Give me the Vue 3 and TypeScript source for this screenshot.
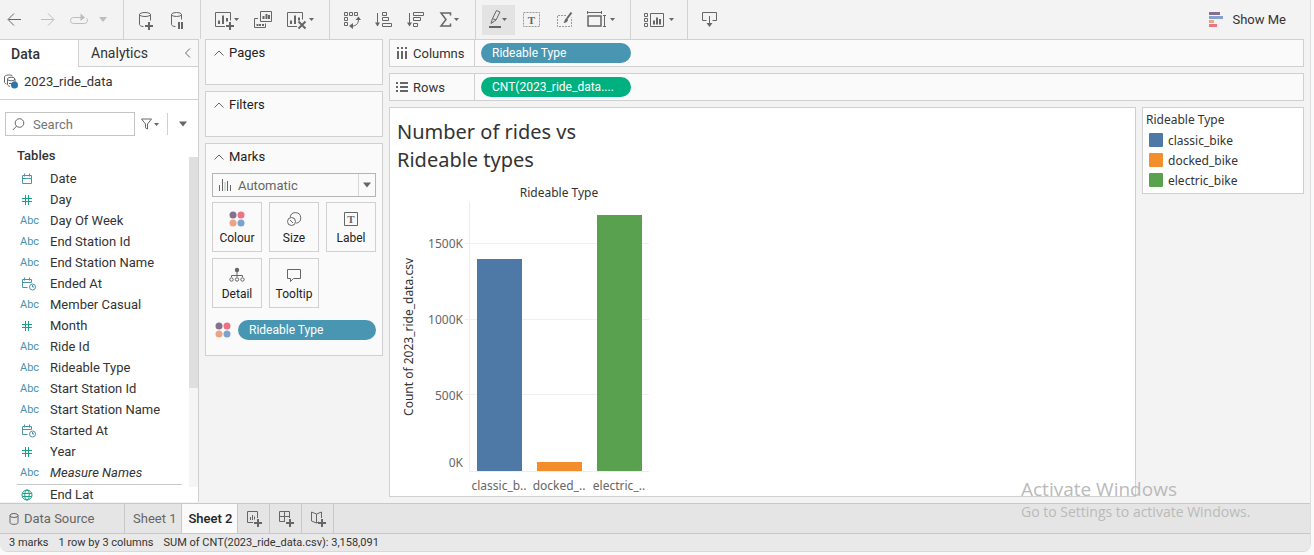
<script setup lang="ts">
import { ref } from 'vue'

type FieldKind = 'date' | 'datetime' | 'number' | 'text' | 'geo'
interface Field { name: string; kind: FieldKind; italic?: boolean }
interface Bar { label: string; short: string; value: number; color: string }

const fields: Field[] = [
  { name: 'Date', kind: 'date' },
  { name: 'Day', kind: 'number' },
  { name: 'Day Of Week', kind: 'text' },
  { name: 'End Station Id', kind: 'text' },
  { name: 'End Station Name', kind: 'text' },
  { name: 'Ended At', kind: 'datetime' },
  { name: 'Member Casual', kind: 'text' },
  { name: 'Month', kind: 'number' },
  { name: 'Ride Id', kind: 'text' },
  { name: 'Rideable Type', kind: 'text' },
  { name: 'Start Station Id', kind: 'text' },
  { name: 'Start Station Name', kind: 'text' },
  { name: 'Started At', kind: 'datetime' },
  { name: 'Year', kind: 'number' },
  { name: 'Measure Names', kind: 'text', italic: true },
]
const measures: Field[] = [{ name: 'End Lat', kind: 'geo' }]

const bars: Bar[] = [
  { label: 'classic_bike', short: 'classic_b..', value: 1402000, color: '#4e79a7' },
  { label: 'docked_bike', short: 'docked_..', value: 62000, color: '#f28e2b' },
  { label: 'electric_bike', short: 'electric_..', value: 1694091, color: '#59a14f' },
]
const axisMax = 1780000
const ticks = [
  { label: '1500K', value: 1500000 },
  { label: '1000K', value: 1000000 },
  { label: '500K', value: 500000 },
]
const share = (value: number): string => `${((value / axisMax) * 100).toFixed(2)}%`

const markType = ref('Automatic')
const query = ref('')
</script>

<template>
  <div class="app">
    <header class="toolbar">
      <div class="group">
        <button class="tool" aria-label="Undo">
          <svg width="30" height="39" viewBox="0 0 30 39"><path class="s" d="M21 19.5H8.500M14 13.500l-6 6 6 6" /></svg>
        </button>
        <button class="tool dim" aria-label="Redo">
          <svg width="34" height="39" viewBox="30 0 34 39"><path class="s" d="M41 19.500h12.500M48 13.500l6 6-6 6" /></svg>
        </button>
        <button class="tool dim" aria-label="Replay">
          <svg width="30" height="39" viewBox="64 0 30 39"><path class="s" d="M82 17.500h-8.500a3 3 0 0 0 0 6h11a3 3 0 0 0 2-5.200" /><path class="f" d="M80.500 13.500l4.500 4-4.500 3.500z" /></svg>
        </button>
        <button class="tool dim" aria-label="Replay speed">
          <svg width="29" height="39" viewBox="94 0 29 39"><path class="f" d="M99 17h8l-4 5z" /></svg>
        </button>
      </div>
      <div class="group">
        <button class="tool" aria-label="New data source">
          <svg width="38" height="39" viewBox="124 0 38 39"><path class="s" d="M139.500 14.500v10c0 1 1.500 2 4 2M150.500 14.500v6" /><ellipse class="s" cx="145" cy="14.500" rx="5.500" ry="2" /><path class="s2" d="M149 22v8M145 26h8" /></svg>
        </button>
        <button class="tool" aria-label="Pause auto updates">
          <svg width="38" height="39" viewBox="162 0 38 39"><path class="s" d="M171.500 14.500v10c0 1 1.500 2 4 2M181.500 14.500v5" /><ellipse class="s" cx="176.500" cy="14.500" rx="5" ry="2" /><path class="s2" d="M179 22v7M182 22v7" /></svg>
        </button>
      </div>
      <div class="group">
        <button class="tool" aria-label="New worksheet">
          <svg width="46" height="39" viewBox="201 0 46 39"><path class="s" d="M225 26.500h-9.500v-14h15v8" /><path class="s2 t" d="M219 20.500v3.500M223 15.500v8.500M227 18v3.500M230 22v8M226 26h8" /><path class="f" d="M234 18h5l-2.500 3z" /></svg>
        </button>
        <button class="tool" aria-label="Duplicate sheet">
          <svg width="34" height="39" viewBox="247 0 34 39"><path class="s" d="M260.500 11.500h11v10h-11zM258 18.500h-3.500v9h11v-4" /><path class="s2 t" d="M263.500 16v3M266.500 14v5M269 15v4M257.500 24v2M260 24v2M263 24v2" /></svg>
        </button>
        <button class="tool" aria-label="Clear sheet">
          <svg width="48" height="39" viewBox="281 0 48 39"><path class="s" d="M297 26.500h-9.500v-14h15v7" /><path class="s2 t" d="M291 20.500v3.500M295 15.500v8.500M299 17.500v3" /><path class="s2" d="M298.500 21.500l7 7M305.500 21.500l-7 7" /><path class="f" d="M309 18h5l-2.500 3z" /></svg>
        </button>
      </div>
      <div class="group">
        <button class="tool" aria-label="Swap rows and columns">
          <svg width="38" height="39" viewBox="330 0 38 39"><path class="s" d="M344.500 12.500h3v3h-3zM349.500 12.500h3v3h-3zM354.500 12.500h3v3h-3zM344.500 17.500h3v3h-3zM344.500 22.500h3v3h-3zM358.500 19.500c0 4-2.500 6.500-6 6.500" /><path class="f" d="M355.500 20l3-3.500 2.500 3.500zM353 23v6l-4-3z" /></svg>
        </button>
        <button class="tool" aria-label="Sort ascending">
          <svg width="32" height="39" viewBox="368 0 32 39"><path class="s" d="M377.500 13v12M382.500 12.500h4v3h-4zM382.500 17.500h6v3h-6zM382.500 23.500h9v3h-9z" /><path class="f" d="M375 22.500h5l-2.500 4z" /></svg>
        </button>
        <button class="tool" aria-label="Sort descending">
          <svg width="32" height="39" viewBox="400 0 32 39"><path class="s" d="M409.500 13v12M413.500 12.500h10v3h-10zM413.500 17.500h7v3h-7zM413.500 23.500h4v3h-4z" /><path class="f" d="M407 22.500h5l-2.500 4z" /></svg>
        </button>
        <button class="tool" aria-label="Totals">
          <svg width="43" height="39" viewBox="432 0 43 39"><path class="s b" d="M450.500 15.500v-2.500h-9.500l5 6.500-5 6.500h9.500v-2.500" /><path class="f" d="M454 18h5l-2.500 3z" /></svg>
        </button>
      </div>
      <div class="group mid">
        <button class="tool on" aria-label="Highlight">
          <svg width="33" height="30" viewBox="482 5 33 30"><path class="s" d="M492.500 18.500l4-8 3.500 1.500-4 8zM492.500 18.500l-1.500 5 5-3.500" /><path class="s2" d="M489 27h12" /><path class="f" d="M502 18h5l-2.500 3z" /></svg>
        </button>
        <button class="tool" aria-label="Show mark labels">
          <svg width="33" height="39" viewBox="515 0 33 39"><rect class="s dash" x="523.500" y="12.500" width="16" height="14" /><text x="531.500" y="24" text-anchor="middle" class="tee">T</text></svg>
        </button>
        <button class="tool" aria-label="Format">
          <svg width="32" height="39" viewBox="548 0 32 39"><path class="s dash" d="M566 15.500h-8.500v11h14v-9" /><path class="s2" d="M571.500 12.500l-4.500 6" /><path class="f" d="M566.500 18l1.500 1.500c0 2-2 3.500-4.500 3.500 1-1 1-4 3-5z" /></svg>
        </button>
        <button class="tool" aria-label="Fit">
          <svg width="50" height="39" viewBox="580 0 50 39"><path class="s b" d="M588 16h13v10h-13z" /><path class="s" d="M587.500 11v3M601.500 11v3M587 12.500h15M604.500 15v12M603 15.500h3M603 26.500h3" /><path class="f" d="M610 18h5l-2.500 3z" /></svg>
        </button>
      </div>
      <div class="group">
        <button class="tool" aria-label="Show or hide cards">
          <svg width="56" height="39" viewBox="631 0 56 39"><path class="s" d="M644.500 13.500h3v3h-3zM644.500 18.500h3v3h-3zM644.500 23.500h3v3h-3zM650.500 13.500h13v13h-13z" /><path class="s2 t" d="M654 20.500v4M657 17.500v7M660 19v5.500" /><path class="f" d="M669 18h5l-2.500 3z" /></svg>
        </button>
      </div>
      <div class="group">
        <button class="tool" aria-label="Download">
          <svg width="44" height="39" viewBox="688 0 44 39"><path class="s" d="M706.500 20.500h-4v-8h14v8h-4M709.500 16v9" /><path class="f" d="M706.500 23h6l-3 4z" /></svg>
        </button>
      </div>
      <button class="show-me">
        <svg width="14" height="15" viewBox="0 0 14 15"><path fill="#85718f" d="M0 0h11v3H0z" /><path fill="#86a1cb" d="M0 4h14v3H0z" /><path fill="#eca583" d="M0 8h5v3H0z" /><path fill="#ec7381" d="M0 12h8v3H0z" /></svg>
        <span>Show Me</span>
      </button>
    </header>

    <main class="workspace">
      <aside class="data-pane">
        <div class="pane-tabs">
          <button class="pane-tab active">Data</button>
          <button class="pane-tab other">Analytics</button>
          <button class="collapse" aria-label="Collapse pane">
            <svg width="8" height="10" viewBox="0 0 8 10"><path class="s" d="M6 .5L1.500 5 6 9.500" /></svg>
          </button>
        </div>
        <div class="source">
          <svg width="15" height="16" viewBox="0 0 15 16"><path class="s" d="M.5 3v5c0 1 .8 1.600 2 2M.5 3c0-2.500 7-2.500 8-1M3.500 5v5.500c0 1 1 1.500 2.500 1.800M11 5v3" /><ellipse class="s" cx="7.200" cy="5" rx="3.700" ry="1.800" /><path class="s" d="M5 9.500h3" /><circle cx="10.500" cy="11" r="3.500" fill="#2a76ad" /></svg>
          <span>2023_ride_data</span>
        </div>
        <div class="search-row">
          <label class="search">
            <svg width="13" height="13" viewBox="0 0 13 13"><circle class="s" cx="7.500" cy="5" r="4.300" /><path class="s" d="M4.500 8.200L.8 12" /></svg>
            <input v-model="query" type="text" placeholder="Search" aria-label="Search fields" />
          </label>
          <button class="plain filter" aria-label="Filter fields">
            <svg width="18" height="12" viewBox="0 0 18 12"><path class="s" d="M.5 1h10l-4 5v5l-2-1.200V6z" /><path class="f" d="M13 5h5l-2.500 3z" /></svg>
          </button>
          <button class="plain more" aria-label="More options">
            <svg width="8" height="6" viewBox="0 0 8 6"><path class="f" d="M0 .5h8L4 5.500z" /></svg>
          </button>
        </div>
        <div class="field-area">
          <div class="fields">
            <h2>Tables</h2>
            <ul v-for="(list, i) in [fields, measures]" :key="i" :class="{ measures: i === 1 }">
              <li v-for="f in list" :key="f.name">
                <span class="kind">
                  <svg v-if="f.kind === 'date'" width="12" height="12" viewBox="0 0 12 12"><path class="blue" d="M1.500 2.500h9v8h-9zM1.500 5.500h9M3.500.5v3M8.500.5v3" /></svg>
                  <svg v-else-if="f.kind === 'datetime'" width="16" height="14" viewBox="0 0 16 14"><path class="blue" d="M6.500 10.500h-5v-8h9v3M1.500 5.500h9M3.500.5v3M8.500.5v3" /><circle class="blue" cx="11.500" cy="10" r="3" /><path class="blue" d="M11.500 8v2h1.500" /></svg>
                  <svg v-else-if="f.kind === 'number'" width="12" height="12" viewBox="0 0 12 12"><path class="green" d="M4.500 1v10M7.500 1v10M1 4.500h10M1 7.500h10" /></svg>
                  <svg v-else-if="f.kind === 'geo'" width="12" height="12" viewBox="0 0 12 12"><circle class="green" cx="6" cy="6" r="5" /><ellipse class="green" cx="6" cy="6" rx="2.200" ry="5" /><path class="green" d="M1.500 4.500h9M1.500 7.500h9" /></svg>
                  <span v-else class="abc">Abc</span>
                </span>
                <span :class="{ italic: f.italic }">{{ f.name }}</span>
              </li>
            </ul>
          </div>
          <div class="scroll"><div class="thumb"></div></div>
        </div>
      </aside>

      <section class="cards">
        <div class="card shelf-card">
          <h3><svg width="10" height="6" viewBox="0 0 10 6"><path class="s" d="M.5 5.500L5 1l4.500 4.500" /></svg>Pages</h3>
        </div>
        <div class="card shelf-card">
          <h3><svg width="10" height="6" viewBox="0 0 10 6"><path class="s" d="M.5 5.500L5 1l4.500 4.500" /></svg>Filters</h3>
        </div>
        <div class="card marks">
          <h3><svg width="10" height="6" viewBox="0 0 10 6"><path class="s" d="M.5 5.500L5 1l4.500 4.500" /></svg>Marks</h3>
          <div class="mark-select">
            <svg width="12" height="12" viewBox="0 0 12 12"><path class="s" d="M.5 6v6M3.500 0v12M8.500 2v10M11.500 6v6" /><path class="s pale" d="M6 3v9" /></svg>
            <select v-model="markType" aria-label="Mark type">
              <option>Automatic</option>
            </select>
            <span class="drop"><svg width="8" height="6" viewBox="0 0 8 6"><path class="f" d="M0 .5h8L4 5.500z" /></svg></span>
          </div>
          <div class="mark-grid">
            <button>
              <svg width="16" height="16" viewBox="0 0 16 16"><circle cx="4" cy="4" r="3.500" fill="#85718f" /><circle cx="12" cy="4" r="3.500" fill="#ec7381" /><circle cx="4" cy="12" r="3.500" fill="#eca583" /><circle cx="12" cy="12" r="3.500" fill="#7ba3cb" /></svg>
              Colour
            </button>
            <button>
              <svg width="16" height="16" viewBox="0 0 16 16"><path class="s" d="M4.200 6.200a5.300 5.300 0 1 1 6 6" /><circle class="s" cx="5.500" cy="10.500" r="4" /><path class="s" d="M4 9l3 3" /></svg>
              Size
            </button>
            <button>
              <svg width="16" height="16" viewBox="0 0 16 16"><path class="s" d="M1.500 1.500h13v13h-13z" /><text x="8" y="12" text-anchor="middle" class="tee">T</text></svg>
              Label
            </button>
            <button>
              <svg width="16" height="16" viewBox="0 0 16 16"><circle class="f" cx="8" cy="3" r="2.200" /><path class="s" d="M8 5v5M2.500 10V8.500h11V10" /><circle class="s" cx="2.500" cy="12.500" r="1.700" /><circle class="s" cx="8" cy="12.500" r="1.700" /><circle class="s" cx="13.500" cy="12.500" r="1.700" /></svg>
              Detail
            </button>
            <button>
              <svg width="16" height="16" viewBox="0 0 16 16"><path class="s" d="M1.500 2.500h13v9h-7l-3 3v-3h-3z" /></svg>
              Tooltip
            </button>
          </div>
          <div class="encoding">
            <svg width="16" height="16" viewBox="0 0 16 16"><circle cx="4" cy="4" r="3.500" fill="#85718f" /><circle cx="12" cy="4" r="3.500" fill="#ec7381" /><circle cx="4" cy="12" r="3.500" fill="#eca583" /><circle cx="12" cy="12" r="3.500" fill="#7ba3cb" /></svg>
            <button class="pill blue-pill">Rideable Type</button>
          </div>
        </div>
      </section>

      <section class="canvas">
        <div class="shelf">
          <div class="shelf-name">
            <svg width="12" height="12" viewBox="0 0 12 12"><path class="s2" d="M2 0v2M6 0v2M10 0v2M2 4v8M6 4v8M10 4v8" /></svg>Columns
          </div>
          <button class="pill blue-pill">Rideable Type</button>
        </div>
        <div class="shelf">
          <div class="shelf-name">
            <svg width="12" height="12" viewBox="0 0 12 12"><path class="s2 t" d="M0 2h2M0 6h2M0 10h2M4 2h8M4 6h8M4 10h8" /></svg>Rows
          </div>
          <button class="pill green-pill">CNT(2023_ride_data....</button>
        </div>
        <div class="view-row">
          <article class="view">
            <h1>Number of rides vs<br />Rideable types</h1>
            <div class="chart">
              <div class="axis-title"><span>Count of 2023_ride_data.csv</span></div>
              <div class="y-axis">
                <span v-for="t in ticks" :key="t.label" class="tick" :style="{ bottom: share(t.value) }">{{ t.label }}</span>
                <span class="tick zero">0K</span>
              </div>
              <div class="column">
                <div class="chart-head">Rideable Type</div>
                <div class="plot">
                  <i v-for="t in ticks" :key="t.label" class="grid-line" :style="{ bottom: share(t.value) }"></i>
                  <div v-for="b in bars" :key="b.label" class="slot">
                    <div class="bar" :style="{ height: share(b.value), background: b.color }"></div>
                  </div>
                </div>
                <div class="x-axis"><span v-for="b in bars" :key="b.label">{{ b.short }}</span></div>
              </div>
            </div>
          </article>
          <aside class="legend">
            <h4>Rideable Type</h4>
            <ul>
              <li v-for="b in bars" :key="b.label"><i class="swatch" :style="{ background: b.color }"></i>{{ b.label }}</li>
            </ul>
          </aside>
        </div>
      </section>
    </main>

    <nav class="sheet-tabs">
      <button class="source-tab">
        <svg width="10" height="12" viewBox="0 0 10 12"><ellipse class="s" cx="5" cy="2.500" rx="4" ry="2" /><path class="s" d="M1 2.500v7c0 2.500 8 2.500 8 0v-7" /></svg>Data Source
      </button>
      <button class="sheet-tab">Sheet 1</button>
      <button class="sheet-tab current">Sheet 2</button>
      <button class="new-tab" aria-label="New worksheet">
        <svg width="16" height="16" viewBox="0 0 16 16"><path class="s" d="M7 11.500H1.500v-11h10V7M4.500 6v3M6.500 4v5M8.500 5.500v3" /><path class="s2" d="M12 8v8M8 12h8" /></svg>
      </button>
      <button class="new-tab" aria-label="New dashboard">
        <svg width="16" height="16" viewBox="0 0 16 16"><path class="s" d="M7 10.500H1.500v-10h10V7M1.500 5.500h10M6.500.5v10" /><path class="s2" d="M12 8v8M8 12h8" /></svg>
      </button>
      <button class="new-tab" aria-label="New story">
        <svg width="16" height="16" viewBox="0 0 16 16"><path class="s" d="M6.500 3v9l-5-2V1l5 2 5-2v6M6.500 12l2-1" /><path class="s2" d="M12 8v8M8 12h8" /></svg>
      </button>
    </nav>
    <footer class="status">
      <span>3 marks</span><span>1 row by 3 columns</span><span>SUM of CNT(2023_ride_data.csv): 3,158,091</span>
    </footer>

    <div class="watermark"><strong>Activate Windows</strong><span>Go to Settings to activate Windows.</span></div>
  </div>
</template>

<style>
body { background: #fafafa; }
</style>

<style scoped>
* { box-sizing: border-box; }
h1, h2, h3, h4, ul { margin: 0; padding: 0; font-weight: 400; list-style: none; }
button { border: 0; padding: 0; background: none; font: inherit; color: inherit; }
svg { display: block; flex: none; }
.s { fill: none; stroke: #666; }
.s2 { fill: none; stroke: #666; stroke-width: 2; }
.b { stroke-width: 1.5; }
.t { stroke-width: 2; }
.f { fill: #666; }
.pale { stroke: #bbb; }
.dim .s { stroke: #bdbdbd; }
.dim .f { fill: #bdbdbd; }
.dash { stroke: #999; stroke-dasharray: 2 1; }
.tee { font: bold 11px "Liberation Serif", serif; fill: #666; }
.blue { fill: none; stroke: #4a93ad; }
.green { fill: none; stroke: #16a085; }

.app {
  position: relative;
  display: flex;
  flex-direction: column;
  height: calc(100vh - 3px);
  margin-right: 3px;
  overflow: hidden;
  background: #f3f3f3;
  border-right: 1px solid #dedede;
  border-bottom: 1px solid #d8d8d8;
  border-radius: 0 0 8px 8px;
  font-family: Roboto, "Liberation Sans", sans-serif;
  font-size: 13px;
  color: #333;
}

.toolbar { display: flex; flex: none; height: 39px; }
.group { display: flex; height: 39px; align-items: center; }
.group + .group { border-left: 1px solid #d2d2d2; }
.mid { padding-left: 6px; }
.on { background: #e3e3e3; }
.show-me { display: flex; align-items: center; gap: 9px; margin-left: auto; margin-right: 24px; }

.workspace { display: flex; flex: 1; min-height: 0; }

.data-pane {
  display: flex;
  flex-direction: column;
  flex: none;
  width: 199px;
  margin-bottom: 1px;
  background: #fff;
  border: 1px solid #d0d0d0;
  border-width: 1px 1px 0 0;
}
.pane-tabs { display: flex; height: 27px; flex: none; font-size: 14px; }
.pane-tab.active { width: 78px; padding-right: 27px; font-weight: 500; }
.other { flex: 1; padding-left: 12px; text-align: left; }
.other, .collapse { background: #f8f8f8; border-bottom: 1px solid #d0d0d0; }
.other { border-left: 1px solid #d0d0d0; }
.collapse { width: 14px; }
.source { display: flex; flex: none; gap: 5px; height: 33px; padding: 7px 0 0 4px; border-bottom: 1px solid #d0d0d0; line-height: 16px; }
.search-row { display: flex; flex: none; align-items: center; height: 24px; margin: 12px 0 8px 5px; }
.search { display: flex; align-items: center; gap: 8px; width: 130px; height: 24px; padding-left: 6px; border: 1px solid #c4c4c4; }
.search input { width: 90px; padding: 0; border: 0; outline: 0; font: inherit; color: #333; background: none; }
.search input::placeholder { color: #757575; }
.filter { height: 22px; padding: 0 8px 0 6px; border-right: 1px solid #d0d0d0; }
.more { margin-left: 11px; }

.field-area { display: flex; flex: 1; min-height: 0; }
.fields { flex: 1; min-height: 0; overflow: hidden; padding-left: 17px; }
.fields h2 { height: 24px; font-size: 13px; line-height: 24px; font-weight: 500; }
.fields li { display: flex; align-items: center; height: 21px; white-space: nowrap; }
.fields .measures { border-top: 1px solid #c8c8c8; margin-right: 7px; margin-top: 1px; }
.fields .measures li { height: 19px; }
.kind { display: flex; width: 33px; padding-left: 4px; }
.abc { margin-left: -1px; font-size: 11px; color: #4a93ad; }
.italic { font-style: italic; }
.scroll { width: 9px; margin: 13px 0 15px; background: #f5f5f5; }
.thumb { height: 70%; background: #dfdfdf; }

.cards { display: flex; flex-direction: column; flex: none; gap: 6px; width: 178px; margin: 0 6px; }
.card { background: #fafafa; border: 1px solid #d0d0d0; }
.shelf-card { height: 46px; }
.card h3 { display: flex; align-items: center; gap: 5px; height: 25px; padding-left: 8px; font-size: 13px; color: #222; }
.marks { padding: 0 6px 15px; }
.card.marks h3 { padding-left: 2px; margin-bottom: 4px; }
.mark-select { display: flex; align-items: center; height: 24px; margin-bottom: 5px; padding-left: 6px; border: 1px solid #b4b4b4; background: #fafafa; }
.mark-select select { flex: 1; appearance: none; margin: 0; padding: 0 0 0 7px; border: 0; outline: 0; background: none; font: inherit; color: #666; }
.drop { display: flex; align-items: center; height: 22px; padding: 0 4px; border-left: 1px solid #d8d8d8; }
.mark-grid { display: grid; grid-template-columns: repeat(3, 50px); justify-content: space-between; gap: 6px 0; }
.mark-grid button { display: flex; flex-direction: column; align-items: center; gap: 4px; height: 50px; padding-top: 8px; border: 1px solid #d0d0d0; font-size: 12px; line-height: 14px; color: #222; }
.encoding { display: flex; align-items: center; gap: 7px; margin-top: 12px; padding-left: 3px; }
.encoding .pill { flex: 1; }
.pill { height: 20px; padding: 0 11px; border-radius: 10px; color: #fff; font-size: 12px; text-align: left; white-space: nowrap; }
.blue-pill { background: #4996b2; }
.green-pill { background: #00b180; }

.canvas { display: flex; flex-direction: column; flex: 1; min-width: 0; gap: 6px; margin: 0 6px 6px 0; }
.shelf { display: flex; align-items: center; flex: none; height: 28px; background: #fafafa; border: 1px solid #d0d0d0; }
.shelf .pill { width: 150px; margin-left: 6px; }
.shelf-name { display: flex; align-items: center; gap: 5px; width: 85px; height: 26px; padding-left: 6px; border-right: 1px solid #d0d0d0; }
.view-row { display: flex; flex: 1; gap: 6px; min-height: 0; align-items: flex-start; font-family: "Noto Sans", "Open Sans", sans-serif; font-size: 12px; }
.view { display: flex; flex-direction: column; align-self: stretch; flex: 1; min-width: 0; padding: 10px 7px 0; background: #fff; border: 1px solid #d0d0d0; }
.view h1 { font-size: 20px; line-height: 28px; }
.chart { display: flex; flex: 1; min-height: 0; margin-top: 9px; }
.axis-title { display: flex; width: 22px; margin: 19px 0 25px; align-items: center; justify-content: center; }
.axis-title span { writing-mode: vertical-rl; transform: rotate(180deg); white-space: nowrap; }
.y-axis { position: relative; width: 50px; margin: 19px 0 24px; color: #666; }
.tick { position: absolute; right: 6px; line-height: 16px; transform: translateY(50%); }
.zero { bottom: 9px; }
.column { display: flex; flex-direction: column; width: 180px; }
.chart-head { height: 19px; line-height: 19px; text-align: center; }
.plot { position: relative; display: flex; flex: 1; min-height: 0; border: 1px solid #ececec; border-width: 0 0 1px 1px; }
.grid-line { position: absolute; left: -5px; right: 0; height: 1px; background: #f0f0f0; }
.slot { position: relative; display: flex; flex: 1; align-items: flex-end; justify-content: center; }
.bar { width: 45px; }
.x-axis { display: flex; height: 24px; line-height: 28px; color: #666; }
.x-axis span { width: 60px; text-align: center; white-space: nowrap; }
.legend { flex: none; width: 162px; padding: 2px 3px 3px; background: #fff; border: 1px solid #d0d0d0; }
.legend h4 { line-height: 20px; }
.legend li { display: flex; align-items: center; gap: 5px; height: 20px; padding-left: 3px; }
.swatch { width: 14px; height: 14px; border-radius: 1px; }

.sheet-tabs { display: flex; flex: none; height: 31px; background: #e5e5e5; border: 1px solid #c8c8c8; border-width: 1px 0; color: #666; }
.sheet-tabs button { border-right: 1px solid #c8c8c8; }
.source-tab { display: flex; align-items: center; gap: 5px; width: 125px; padding-left: 9px; }
.sheet-tab { padding: 0 5px 0 8px; }
.sheet-tab.current { padding: 0 5px 0 6px; background: #fafafa; color: #222; font-weight: 500; }
.new-tab { display: flex; align-items: center; justify-content: center; width: 32px; }
.status { display: flex; flex: none; gap: 10px; height: 17px; padding-left: 9px; background: #e9e9e9; font-size: 11px; line-height: 17px; }

.watermark { position: absolute; left: 1021px; bottom: 29px; display: flex; flex-direction: column; color: #bababa; font: 14px/20px "Open Sans", sans-serif; pointer-events: none; }
.watermark strong { font-size: 19px; line-height: 26px; font-weight: 400; }
</style>
